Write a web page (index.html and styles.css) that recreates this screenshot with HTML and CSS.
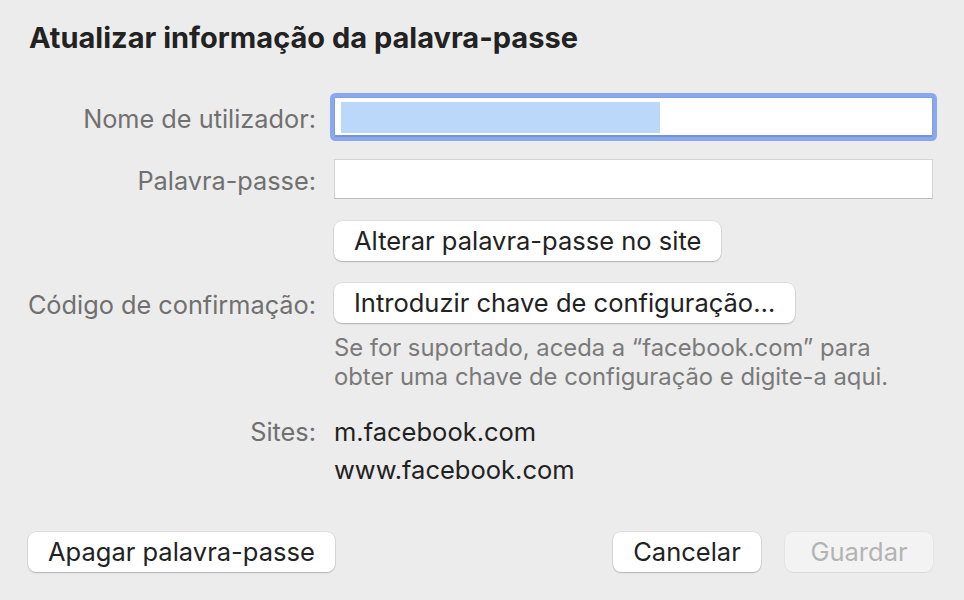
FILE: index.html
```html
<!DOCTYPE html>
<html lang="pt">
<head>
    <meta charset="UTF-8">
    <meta name="viewport" content="width=device-width, initial-scale=1.0">
    <title>Atualizar informação da palavra-passe</title>
    <link rel="stylesheet" href="styles.css">
</head>
<body>
    <div class="dialog">
        <h1 class="title">Atualizar informação da palavra-passe</h1>

        <div class="form">
            <div class="label">Nome de utilizador:</div>
            <div class="field">
                <div class="input focused"><span class="selection"></span></div>
            </div>

            <div class="label">Palavra-passe:</div>
            <div class="field">
                <div class="input"></div>
            </div>

            <div class="label"></div>
            <div class="field">
                <button class="btn">Alterar palavra-passe no site</button>
            </div>

            <div class="label">Código de confirmação:</div>
            <div class="field">
                <button class="btn">Introduzir chave de configuração…</button>
            </div>

            <div class="label"></div>
            <p class="help">Se for suportado, aceda a “facebook.com” para<br>obter uma chave de configuração e digite-a aqui.</p>

            <div class="label sites-label">Sites:</div>
            <ul class="sites">
                <li>m.facebook.com</li>
                <li>www.facebook.com</li>
            </ul>
        </div>

        <div class="footer">
            <button class="btn">Apagar palavra-passe</button>
            <div class="actions">
                <button class="btn">Cancelar</button>
                <button class="btn disabled" disabled>Guardar</button>
            </div>
        </div>
    </div>
</body>
</html>
```

FILE: styles.css
```css
body {
    margin: 0;
    background-color: #ececec;
    font-family: 'Inter', 'Noto Sans', sans-serif;
    color: #262626;
}

.dialog {
    width: 964px;
    height: 600px;
    box-sizing: border-box;
    padding: 21px 31px 0 28px;
}

.title {
    margin: 0 0 0 1px;
    font-size: 29px;
    font-weight: 700;
    line-height: 34px;
    color: #222;
}

.form {
    display: grid;
    grid-template-columns: 288px 1fr;
    column-gap: 18px;
    row-gap: 22px;
    margin-top: 42px;
    align-items: center;
}

.label {
    display: flex;
    justify-content: flex-end;
    white-space: nowrap;
    font-size: 25.3px;
    line-height: 30px;
    padding-top: 3px;
    color: #707070;
}

.field {
    display: flex;
}

.input {
    flex: 1;
    height: 40px;
    box-sizing: border-box;
    background-color: #fff;
    border: 1px solid #d4d4d4;
    border-bottom-color: #bcbcbc;
    padding: 4px 6px;
}

.input.focused {
    border-color: #7e9de4;
    border-bottom: 2px solid #7491dc;
    box-shadow: 0 0 0 4px #8aa8ec;
    border-radius: 2px;
}

.selection {
    display: block;
    width: 319px;
    height: 31px;
    background-color: #bbd7fa;
}

.btn {
    height: 40px;
    padding: 0 20px 2px;
    border: none;
    border-radius: 8px;
    background-color: #fff;
    box-shadow: 0 0 0 0.5px rgba(0, 0, 0, 0.12), 0 1px 1.5px rgba(0, 0, 0, 0.2);
    font-family: inherit;
    font-size: 25.5px;
    color: #222;
    white-space: nowrap;
}

.btn.disabled {
    background-color: #f3f3f3;
    color: #b3b3b3;
    box-shadow: 0 0 0 0.5px rgba(0, 0, 0, 0.06), 0 1px 1px rgba(0, 0, 0, 0.05);
}

.help {
    margin: -12px 0 0;
    font-size: 23.8px;
    line-height: 29px;
    color: #7a7a7a;
}

.sites-label {
    align-self: start;
    line-height: 38px;
    padding-top: 0;
}

.sites {
    list-style: none;
    margin: 0;
    padding: 0;
    font-size: 25.5px;
    line-height: 38px;
    color: #222;
}

.footer {
    display: flex;
    justify-content: space-between;
    margin-top: 43px;
}

.actions {
    display: flex;
    gap: 24px;
}

.actions .btn {
    min-width: 148px;
}
```
